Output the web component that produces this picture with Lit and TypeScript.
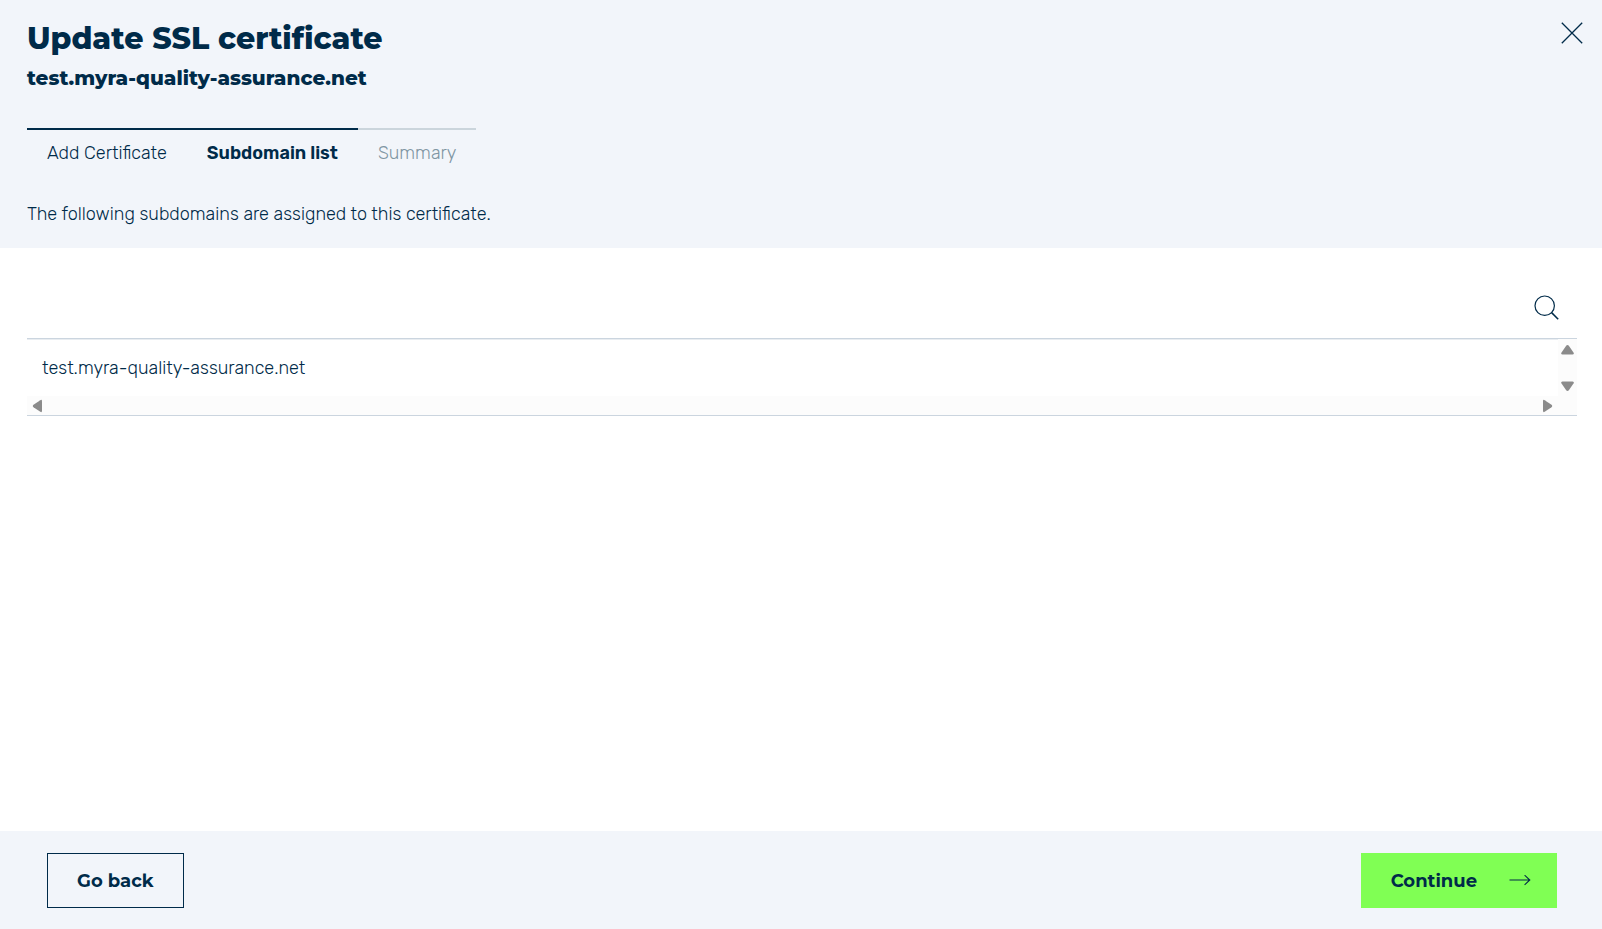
import { LitElement, css, html, svg } from "lit";
import { customElement, property, state } from "lit/decorators.js";
import { classMap } from "lit/directives/class-map.js";

type Direction = "up" | "down" | "left" | "right";

const ARROWS: Record<Direction, string> = {
  up: "M9.500 5q.8 0 1.300.7l4.700 6.800q1 1.900-1 1.900H4.500q-2 0-1-1.900l4.700-6.800q.5-.7 1.300-.7z",
  down: "M9.500 14q.8 0 1.300-.7l4.700-6.800q1-1.900-1-1.900H4.500q-2 0-1 1.900l4.700 6.800q.5.7 1.300.7z",
  left: "M5.800 10q0-.8.7-1.300l6.800-4.500q1.700-1 1.700 1v9.600q0 2-1.700 1l-6.800-4.500q-.7-.5-.7-1.300z",
  right: "M14.200 10q0-.8-.7-1.300L6.700 4.200Q5 3.200 5 5.200v9.600q0 2 1.700 1l6.800-4.500q.7-.5.7-1.300z",
};

@customElement("scroll-list")
export class ScrollList extends LitElement {
  static styles = css`
    :host {
      display: grid;
      grid-template-columns: minmax(0, 1fr) 19px;
      grid-template-rows: auto 19px;
      border-top: 1px solid #cbd5df;
      border-bottom: 1px solid #cbd5df;
    }
    .items {
      margin: 0;
      padding: 0;
      list-style: none;
      overflow: hidden;
      border-top: 1px solid #e9edf1;
    }
    .item {
      padding: 16px 15px;
      line-height: 24px;
    }
    .track {
      display: flex;
      justify-content: space-between;
      background: #fcfcfc;
    }
    .horizontal {
      padding-right: 1px;
    }
    .vertical {
      flex-direction: column;
      grid-row: 1;
      grid-column: 2;
      padding-top: 1px;
    }
    .corner {
      background: #fcfcfc;
    }
    .arrow {
      display: block;
      width: 19px;
      height: 19px;
      padding: 0;
      border: 0;
      background: none;
    }
    .arrow svg {
      display: block;
      fill: #8b8b8b;
    }
  `;

  @property({ attribute: false }) items: string[] = [];

  private scrollItems(dir: Direction) {
    const list = this.renderRoot.querySelector(".items");
    const step = 40;
    list?.scrollBy({
      left: dir === "left" ? -step : dir === "right" ? step : 0,
      top: dir === "up" ? -step : dir === "down" ? step : 0,
    });
  }

  private arrow(dir: Direction) {
    return html`<button
      class="arrow"
      type="button"
      aria-label="Scroll ${dir}"
      @click=${() => this.scrollItems(dir)}
    >
      <svg width="19" height="19" viewBox="0 0 19 19" aria-hidden="true">
        ${svg`<path d=${ARROWS[dir]} />`}
      </svg>
    </button>`;
  }

  render() {
    return html`
      <ul class="items">
        ${this.items.map((name) => html`<li class="item">${name}</li>`)}
      </ul>
      <div class="track vertical">${this.arrow("up")}${this.arrow("down")}</div>
      <div class="track horizontal">
        ${this.arrow("left")}${this.arrow("right")}
      </div>
      <div class="corner"></div>
    `;
  }
}

@customElement("app-root")
export class AppRoot extends LitElement {
  static styles = css`
    :host {
      display: flex;
      flex-direction: column;
      min-height: 100vh;
      background: #fff;
      color: #002b49;
      font: 330 18px/24px Rubik, Roboto, sans-serif;
    }
    button {
      color: inherit;
      cursor: pointer;
    }
    .header {
      display: flex;
      justify-content: space-between;
      align-items: flex-start;
      padding: 18px 15px 22px 27px;
      background: #f2f5fa;
    }
    .title,
    .domain {
      margin: 0;
      font-family: Montserrat, Inter, sans-serif;
      font-weight: 800;
    }
    .title {
      font-size: 30px;
      line-height: 42px;
    }
    .domain {
      margin-top: 6px;
      font-size: 20px;
      line-height: 24px;
    }
    .steps {
      display: flex;
      margin: 38px 0 0;
      padding: 0;
      list-style: none;
    }
    .step {
      padding: 11px 20px;
      border-top: 2px solid #002b49;
    }
    .current {
      font-weight: 600;
    }
    .pending {
      border-color: #cbd5dc;
      color: #8096a3;
    }
    .intro {
      margin: 26px 0 0;
    }
    .close {
      padding: 4px;
      border: 0;
      background: none;
    }
    .icon {
      display: block;
      fill: none;
      stroke: currentColor;
    }
    .main {
      flex: 1;
      padding: 32px 25px 34px 27px;
    }
    .search {
      display: flex;
      align-items: center;
      height: 56px;
      margin-bottom: 2px;
      padding-right: 15px;
    }
    .query {
      flex: 1;
      min-width: 0;
      height: 40px;
      padding: 0 15px;
      border: 0;
      outline: 0;
      background: none;
      color: inherit;
      font: inherit;
    }
    .find {
      padding: 2px;
      border: 0;
      background: none;
    }
    .footer {
      display: flex;
      justify-content: space-between;
      padding: 22px 45px 21px 47px;
      background: #f2f5fa;
    }
    .button {
      display: flex;
      align-items: center;
      gap: 32px;
      height: 55px;
      padding: 0 29px;
      border: 1px solid #002b49;
      background: none;
      font: 700 18px/24px Montserrat, Inter, sans-serif;
    }
    .primary {
      padding: 0 25px 0 29px;
      border-color: #80ff54;
      background: #80ff54;
    }
  `;

  @state() private query = "";

  private domains = ["test.myra-quality-assurance.net"];
  private steps = ["Add Certificate", "Subdomain list", "Summary"];
  private active = 1;

  render() {
    const shown = this.domains.filter((d) => d.includes(this.query));
    return html`
      <header class="header">
        <div>
          <h1 class="title">Update SSL certificate</h1>
          <h2 class="domain">test.myra-quality-assurance.net</h2>
          <ol class="steps">
            ${this.steps.map(
              (label, i) => html`<li
                class=${classMap({
                  step: true,
                  current: i === this.active,
                  pending: i > this.active,
                })}
              >
                ${label}
              </li>`
            )}
          </ol>
          <p class="intro">
            The following subdomains are assigned to this certificate.
          </p>
        </div>
        <button class="close" type="button" aria-label="Close">
          <svg class="icon" width="22" height="22" viewBox="0 0 22 22" aria-hidden="true">
            <path d="M.8.8l20.400 20.400M21.200.8L.8 21.200" stroke-width="1.300" />
          </svg>
        </button>
      </header>
      <main class="main">
        <form class="search" @submit=${(e: Event) => e.preventDefault()}>
          <input
            class="query"
            type="text"
            aria-label="Search subdomains"
            .value=${this.query}
            @input=${(e: Event) =>
              (this.query = (e.target as HTMLInputElement).value)}
          />
          <button class="find" type="submit" aria-label="Search">
            <svg class="icon" width="26" height="26" viewBox="0 0 26 26" aria-hidden="true">
              <circle cx="10.700" cy="10.700" r="9.700" stroke-width="1.200" />
              <path d="M17.600 17.600l6.600 6.600" stroke-width="1.500" />
            </svg>
          </button>
        </form>
        <scroll-list .items=${shown}></scroll-list>
      </main>
      <footer class="footer">
        <button class="button" type="button">Go back</button>
        <button class="button primary" type="button">
          Continue
          <svg class="icon" width="22" height="12" viewBox="0 0 22 12" aria-hidden="true">
            <path d="M.5 5H20.800M15.600.2L20.800 5l-5.200 4.800" stroke-width="1.100" />
          </svg>
        </button>
      </footer>
    `;
  }
}
